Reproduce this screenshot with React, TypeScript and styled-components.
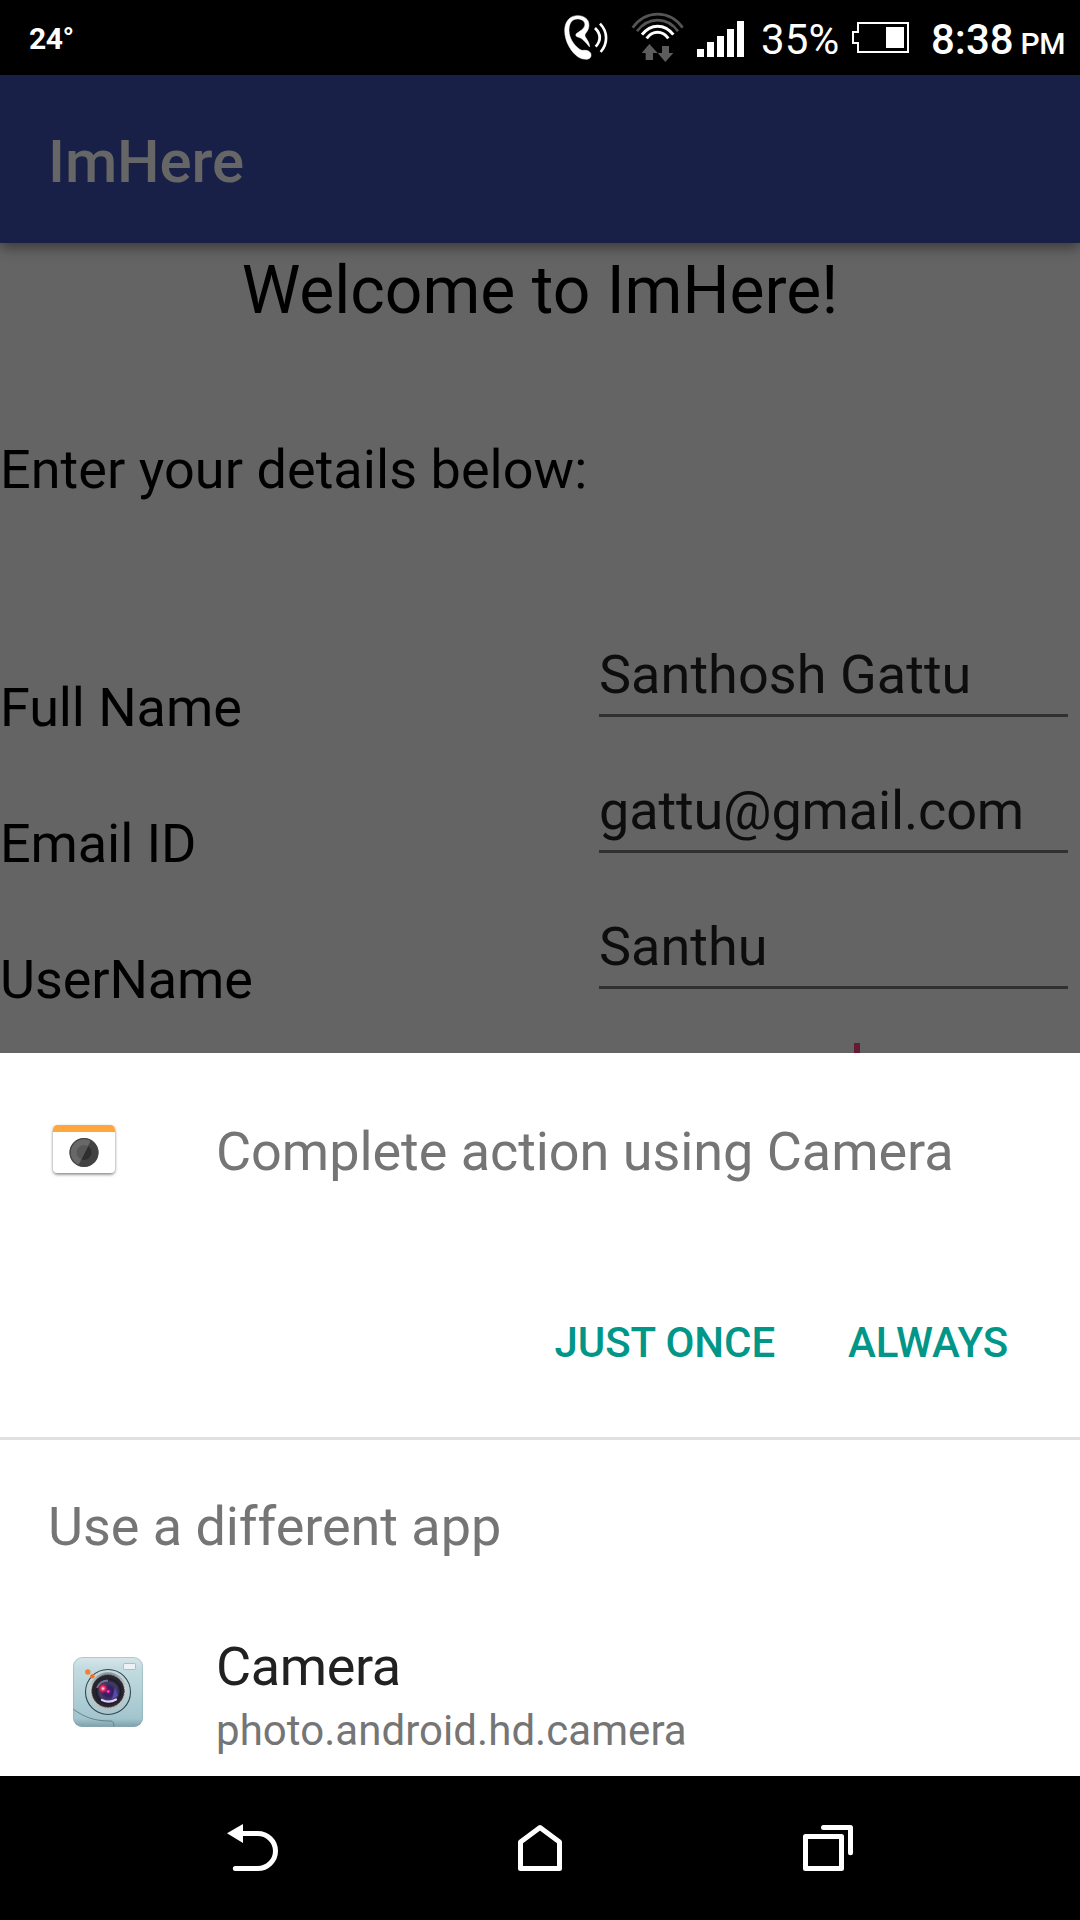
import React from "react";
import styled, { createGlobalStyle } from "styled-components";

const GlobalStyle = createGlobalStyle`
  html, body { margin: 0; padding: 0; background: #000; }
  * { box-sizing: border-box; }
  svg { display: block; flex: none; }
`;

const Screen = styled.div`
  width: 1080px;
  height: 1920px;
  display: flex;
  flex-direction: column;
  overflow: hidden;
  background: #000;
  font-family: Roboto, "Liberation Sans", sans-serif;
  white-space: nowrap;
`;

const StatusBar = styled.header`
  height: 75px;
  flex: none;
  display: flex;
  align-items: flex-start;
  padding-left: 29px;
  background: #000;
  color: #fff;
`;

const StatusText = styled.span<{ $size: number; $weight?: number; $top: number; $width: number; $tracking?: number }>`
  flex: none;
  width: ${(p) => p.$width}px;
  margin-top: ${(p) => p.$top}px;
  font-size: ${(p) => p.$size}px;
  font-weight: ${(p) => p.$weight ?? 400};
  letter-spacing: ${(p) => p.$tracking ?? 0}px;
  line-height: normal;
`;

const StatusIcon = styled.span<{ $top: number; $gap: number }>`
  flex: none;
  margin: ${(p) => p.$top}px ${(p) => p.$gap}px 0 0;
`;

const Activity = styled.main`
  height: 978px;
  flex: none;
  display: flex;
  flex-direction: column;
  overflow: hidden;
  background: #646464;
  color: #000;
`;

const AppBar = styled.div`
  height: 168px;
  flex: none;
  display: flex;
  align-items: center;
  padding: 5px 48px 0;
  background: #192048;
  color: #666;
  font-size: 60px;
  font-weight: 500;
  letter-spacing: -0.1px;
  line-height: 71px;
  box-shadow: 0 5px 12px rgba(0, 0, 0, 0.4);
`;

const Welcome = styled.h1`
  margin: 9px 0 109px;
  flex: none;
  text-align: center;
  font-size: 66px;
  font-weight: 400;
  line-height: 77px;
`;

const Prompt = styled.p`
  margin: 0 0 117px;
  flex: none;
  font-size: 54px;
  letter-spacing: 0.05px;
  line-height: 63px;
`;

const FormRow = styled.div`
  height: 136px;
  flex: none;
  display: grid;
  grid-template-columns: 599px 469px;
  align-items: start;
  font-size: 54px;
  line-height: 63px;
`;

const Label = styled.label`
  padding-top: 58px;
  letter-spacing: -0.1px;
`;

const Field = styled.div<{ $tracking: number }>`
  height: 99px;
  padding-top: 25px;
  border-bottom: 3px solid #303030;
  color: #0d0d0d;
  letter-spacing: ${(p) => p.$tracking}px;
`;

const Caret = styled.div`
  grid-column: 2;
  width: 6px;
  height: 64px;
  margin: 17px 0 0 255px;
  background: #661a34;
`;

const Sheet = styled.section`
  height: 723px;
  flex: none;
  display: flex;
  flex-direction: column;
  background: #fff;
`;

const SheetHeader = styled.div`
  height: 265px;
  display: flex;
  align-items: flex-start;
  padding: 60px 48px 0;
  gap: 96px;
`;

const SheetTitle = styled.h2`
  margin: 7px 0 0;
  color: #757575;
  font-size: 54px;
  font-weight: 400;
  letter-spacing: -0.05px;
  line-height: 63px;
`;

const Actions = styled.div`
  height: 119px;
  display: flex;
  justify-content: flex-end;
  align-items: flex-start;
  padding-right: 72px;
  gap: 73px;
`;

const ActionButton = styled.button`
  padding: 0;
  border: 0;
  background: none;
  color: #009688;
  font: 500 42px/49px Roboto, "Liberation Sans", sans-serif;
  letter-spacing: -0.07px;
`;

const Alternatives = styled.div`
  flex: 1;
  border-top: 3px solid #e0e0e0;
  padding-top: 55px;
`;

const SectionTitle = styled.h3`
  margin: 0 0 77px;
  padding-left: 48px;
  color: #757575;
  font-size: 54px;
  font-weight: 400;
  letter-spacing: -0.05px;
  line-height: 63px;
`;

const AppRow = styled.div`
  display: flex;
  align-items: flex-start;
  padding-left: 72px;
  gap: 72px;

  svg {
    margin-top: 21px;
  }
`;

const AppInfo = styled.div`
  display: flex;
  flex-direction: column;
  gap: 8px;
`;

const AppName = styled.span`
  color: #212121;
  font-size: 54px;
  letter-spacing: -0.4px;
  line-height: 63px;
`;

const AppPackage = styled.span`
  color: #757575;
  font-size: 42px;
  letter-spacing: 0.05px;
  line-height: 49px;
`;

const NavBar = styled.nav`
  height: 144px;
  flex: none;
  display: flex;
  align-items: center;
  justify-content: space-between;
  padding: 0 224px;
  background: #000;
`;

const CallIcon = () => (
  <svg width="50" height="50" viewBox="30 30 150 150" fill="none" stroke="#fff">
    <path d="M44 92C44 124 64 158 86 172C98 179 118 181 122 171C126 161 120 153 108 151C99 150 96 153 89 148C72 136 57 114 57 91C57 70 66 57 82 57C98 57 107 66 104 78C101 88 88 94 79 101C75 106 79 110 86 112C98 115 106 127 119 141C119 129 112 120 106 111C103 105 106 101 110 96C117 86 119 74 114 62C107 51 94 46 80 47C58 48 44 66 44 92Z" fill="#fff" strokeWidth="1.5" />
    <path d="M135 84C153 102 153 122 137 140" strokeWidth="8" />
    <path d="M150 71C174 96 174 130 152 156" strokeWidth="8" />
  </svg>
);

const WifiIcon = () => (
  <svg width="55" height="55" viewBox="240 30 165 165" fill="none">
    <path d="M248 83 C288 29 358 29 398 83" stroke="#555" strokeWidth="8" />
    <path d="M261 94 C294 49 352 49 384 94" stroke="#555" strokeWidth="8" />
    <path d="M276 104 C302 70 344 70 370 104" stroke="#fff" strokeWidth="9" />
    <path d="M290 115 C308 91 337 91 355 115" stroke="#fff" strokeWidth="9" />
    <path d="M298 132 L323 159 H309 V180 H287 V159 H275Z" fill="#5c5c5c" />
    <path d="M346 186 L370 159 H357 V138 H336 V159 H323Z" fill="#5c5c5c" />
  </svg>
);

const SignalIcon = () => (
  <svg width="47" height="36" viewBox="0 0 47 36" fill="#fff">
    <path d="M0 28h7v8H0zM10 21h7v15h-7zM20 15h7v21h-7zM30 8h7v28h-7zM40 0h7v36h-7z" />
  </svg>
);

const BatteryIcon = () => (
  <svg width="57" height="31" viewBox="0 0 57 31" fill="none">
    <path d="M6 1H56V30H6V21H1V10H6Z" stroke="#fff" strokeWidth="2" />
    <path d="M34 5h18v21H34z" fill="#fff" />
  </svg>
);

const HtcCameraIcon = () => (
  <svg width="72" height="72" viewBox="0 0 72 72">
    <defs>
      <filter id="cardShadow" x="-20%" y="-20%" width="140%" height="150%">
        <feDropShadow dx="0" dy="1.5" stdDeviation="1.5" floodOpacity="0.5" />
      </filter>
      <clipPath id="cardClip"><rect x="5" y="12" width="62" height="48" rx="4.5" /></clipPath>
      <clipPath id="lensShine"><path d="M20 20H46.5L26.5 60H20Z" /></clipPath>
    </defs>
    <rect x="5" y="12" width="62" height="48" rx="4.5" fill="#fff" filter="url(#cardShadow)" />
    <path d="M5 12h62v7H5z" fill="#ffa63e" clipPath="url(#cardClip)" />
    <circle cx="36" cy="39.5" r="14.3" fill="#424242" />
    <circle cx="36" cy="39.5" r="7.5" fill="#2f2f2f" />
    <g clipPath="url(#lensShine)">
      <circle cx="36" cy="39.5" r="13.4" fill="#686868" />
      <circle cx="36" cy="39.5" r="7.5" fill="#575757" />
    </g>
    <circle cx="36" cy="39.5" r="14" fill="none" stroke="#444" strokeWidth="1.2" />
  </svg>
);

const HdCameraIcon = () => (
  <svg width="72" height="72" viewBox="0 0 72 72">
    <defs>
      <linearGradient id="body" x1="0" y1="0" x2="0" y2="1">
        <stop offset="0" stopColor="#d9e6e9" />
        <stop offset="0.15" stopColor="#c4dce1" />
        <stop offset="0.88" stopColor="#a2c5cd" />
        <stop offset="1" stopColor="#7e9ea8" />
      </linearGradient>
      <linearGradient id="ring" x1="0" y1="0" x2="0" y2="1">
        <stop offset="0" stopColor="#8c9295" />
        <stop offset="0.4" stopColor="#d2d0ce" />
        <stop offset="1" stopColor="#bdbbba" />
      </linearGradient>
      <radialGradient id="glass">
        <stop offset="0" stopColor="#5b1c96" />
        <stop offset="0.35" stopColor="#2f205f" />
        <stop offset="0.7" stopColor="#443d66" />
        <stop offset="1" stopColor="#15151f" />
      </radialGradient>
      <radialGradient id="flare">
        <stop offset="0" stopColor="#fff" />
        <stop offset="0.35" stopColor="#ff3768" />
        <stop offset="1" stopColor="#c4003d" stopOpacity="0" />
      </radialGradient>
      <clipPath id="bodyClip"><rect x="1" y="1" width="70" height="70" rx="9" /></clipPath>
    </defs>
    <rect x="1" y="1" width="70" height="70" rx="9" fill="url(#body)" />
    <g clipPath="url(#bodyClip)">
      <path d="M1 53C12 61 22 65 38 65C41 65 42 67 42 71" fill="none" stroke="#56727c" strokeWidth="0.8" />
      <rect x="1.5" y="1.5" width="69" height="69" rx="9" fill="none" stroke="#89abb4" strokeOpacity="0.5" />
    </g>
    <rect x="51.5" y="7.5" width="12" height="6" rx="0.8" fill="#edf2f7" stroke="#9eb1ba" strokeWidth="0.8" />
    <circle cx="36" cy="36" r="22.5" fill="none" stroke="#35464d" strokeWidth="1.1" />
    <circle cx="36" cy="35" r="18.7" fill="url(#ring)" />
    <circle cx="36" cy="35" r="16.2" fill="#24252f" stroke="#48494f" strokeWidth="1" strokeDasharray="2 1" />
    <circle cx="36.5" cy="35.5" r="12.7" fill="url(#glass)" />
    <path d="M25 32A12 12 0 0 1 36 24.5" fill="none" stroke="#9c94bb" strokeWidth="2" opacity="0.7" />
    <path d="M30 44Q37 47.5 44 43.5" fill="none" stroke="#e1cdff" strokeWidth="2.3" strokeLinecap="round" />
    <path d="M43 31L46 40L40 43Z" fill="#6652ca" opacity="0.7" />
    <circle cx="31" cy="32.5" r="5.5" fill="url(#flare)" />
    <circle cx="36.2" cy="35.5" r="1.7" fill="#e8148b" />
    <circle cx="36.2" cy="35.5" r="0.7" fill="#ff9adb" />
    <circle cx="15.8" cy="16" r="2.7" fill="#f57f35" />
    <circle cx="20.4" cy="20.2" r="2" fill="#ff6a08" stroke="#e18a5b" strokeWidth="0.5" />
  </svg>
);

const BackIcon = () => (
  <svg width="56" height="56" viewBox="72 150 168 168" fill="none" stroke="#fff" strokeWidth="15">
    <path d="M125 190.5H173A53.5 52.5 0 0 1 173 295.5H106" strokeLinecap="round" />
    <path d="M81 190L129 162V219Z" fill="#fff" stroke="none" />
  </svg>
);

const HomeIcon = () => (
  <svg width="56" height="56" viewBox="936 150 168 168" fill="none" stroke="#fff" strokeWidth="15" strokeLinejoin="round">
    <path d="M961.5 295.5V216L1020 172.5L1078.5 216V295.5Z" />
  </svg>
);

const RecentIcon = () => (
  <svg width="56" height="56" viewBox="120 150 168 168" fill="none" stroke="#fff" strokeWidth="15" strokeLinejoin="round" strokeLinecap="round">
    <path d="M136.5 199.5H244.5V295.5H136.5Z" />
    <path d="M190.5 172.5H271.5V248" />
  </svg>
);

const details = [
  { label: "Full Name", value: "Santhosh Gattu", tracking: 0.05 },
  { label: "Email ID", value: "gattu@gmail.com", tracking: -0.15 },
  { label: "UserName", value: "Santhu", tracking: 0 },
];

export default function App() {
  return (
    <Screen>
      <GlobalStyle />
      <StatusBar>
        <StatusText $size={30} $weight={700} $top={21} $width={531} $tracking={-0.4}>24°</StatusText>
        <StatusIcon $top={10} $gap={20}><CallIcon /></StatusIcon>
        <StatusIcon $top={10} $gap={12}><WifiIcon /></StatusIcon>
        <StatusIcon $top={21} $gap={17}><SignalIcon /></StatusIcon>
        <StatusText $size={42} $top={15} $width={91} $tracking={0.2}>35%</StatusText>
        <StatusIcon $top={22} $gap={22}><BatteryIcon /></StatusIcon>
        <StatusText $size={42} $weight={500} $top={15} $width={89.5}>8:38</StatusText>
        <StatusText $size={30} $weight={500} $top={26} $width={50} $tracking={-0.3}>PM</StatusText>
      </StatusBar>
      <Activity>
        <AppBar>ImHere</AppBar>
        <Welcome>Welcome to ImHere!</Welcome>
        <Prompt>Enter your details below:</Prompt>
        {details.map((d) => (
          <FormRow key={d.label}>
            <Label>{d.label}</Label>
            <Field $tracking={d.tracking}>{d.value}</Field>
          </FormRow>
        ))}
        <FormRow>
          <Caret />
        </FormRow>
      </Activity>
      <Sheet>
        <SheetHeader>
          <HtcCameraIcon />
          <SheetTitle>Complete action using Camera</SheetTitle>
        </SheetHeader>
        <Actions>
          <ActionButton>JUST ONCE</ActionButton>
          <ActionButton>ALWAYS</ActionButton>
        </Actions>
        <Alternatives>
          <SectionTitle>Use a different app</SectionTitle>
          <AppRow>
            <HdCameraIcon />
            <AppInfo>
              <AppName>Camera</AppName>
              <AppPackage>photo.android.hd.camera</AppPackage>
            </AppInfo>
          </AppRow>
        </Alternatives>
      </Sheet>
      <NavBar>
        <BackIcon />
        <HomeIcon />
        <RecentIcon />
      </NavBar>
    </Screen>
  );
}
